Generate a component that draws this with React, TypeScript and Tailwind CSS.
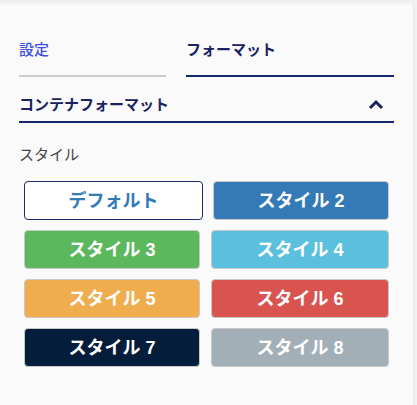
import React from "react";

const font = { fontFamily: '"Noto Sans CJK JP", "Noto Sans", sans-serif' };
const btnFont = { fontFamily: '"Liberation Sans", "Noto Sans CJK JP", sans-serif' };

function Btn({ label, cls, w }: { label: string; cls: string; w: string }) {
  return (
    <button
      className={`${w} h-[39px] rounded-[4px] border text-[18px] font-bold leading-none flex items-center justify-center ${cls}`}
      style={btnFont}
    >
      {label}
    </button>
  );
}

export default function App() {
  return (
    <div className="relative w-[417px] h-[405px] bg-[#fafafa] overflow-hidden" style={font}>
      <div className="absolute inset-x-0 top-0 h-[6px] bg-gradient-to-b from-[#ececec] to-[#fafafa]" />
      <div className="absolute top-0 bottom-0 right-0 w-[4px] bg-[#f1f1f1] border-l border-[#ebebeb]" />
      <div className="pl-[19px] pr-[23px] pt-[38px]">
        <div className="flex gap-[20px]">
          <div className="w-[147px]">
            <div className="text-[15px] leading-[22px] font-medium text-[#3f4fe0] pb-[15px] border-b-2 border-[#cccccc]">
              設定
            </div>
          </div>
          <div className="flex-1">
            <div className="text-[15px] leading-[22px] font-bold text-[#1a2260] pb-[15px] border-b-2 border-[#18286e]">
              フォーマット
            </div>
          </div>
        </div>
        <div className="mt-[16px] flex items-center justify-between pb-[6px] border-b-2 border-[#18286e]">
          <span className="text-[15px] leading-[22px] font-bold text-[#1a2260]">コンテナフォーマット</span>
          <svg width="16" height="12" viewBox="0 0 16 12" className="mr-[10px] mt-[1px]">
            <path d="M2 9 L8 3 L14 9" fill="none" stroke="#1a2260" strokeWidth="3" />
          </svg>
        </div>
        <div className="mt-[20px] text-[15px] leading-[22px] text-[#444444]">スタイル</div>
        <div className="mt-[16px] pl-[5px] flex flex-col gap-[10px]">
          <div className="flex gap-[10px]">
            <Btn label="デフォルト" w="w-[179px]" cls="bg-white border-[#1e2a6e] text-[#337ab7]" />
            <Btn label="スタイル 2" w="w-[176px]" cls="bg-[#337ab7] border-[#c8c8c8] text-white" />
          </div>
          <div className="flex gap-[11px]">
            <Btn label="スタイル 3" w="w-[176px]" cls="bg-[#5cb85c] border-[#c8c8c8] text-white" />
            <Btn label="スタイル 4" w="w-[178px]" cls="bg-[#5bc0de] border-[#c8c8c8] text-white" />
          </div>
          <div className="flex gap-[11px]">
            <Btn label="スタイル 5" w="w-[176px]" cls="bg-[#f0ad4e] border-[#c8c8c8] text-white" />
            <Btn label="スタイル 6" w="w-[178px]" cls="bg-[#d9534f] border-[#c8c8c8] text-white" />
          </div>
          <div className="flex gap-[11px]">
            <Btn label="スタイル 7" w="w-[176px]" cls="bg-[#041d3b] border-[#c8c8c8] text-white" />
            <Btn label="スタイル 8" w="w-[178px]" cls="bg-[#a3afb7] border-[#c8c8c8] text-white" />
          </div>
        </div>
      </div>
    </div>
  );
}
